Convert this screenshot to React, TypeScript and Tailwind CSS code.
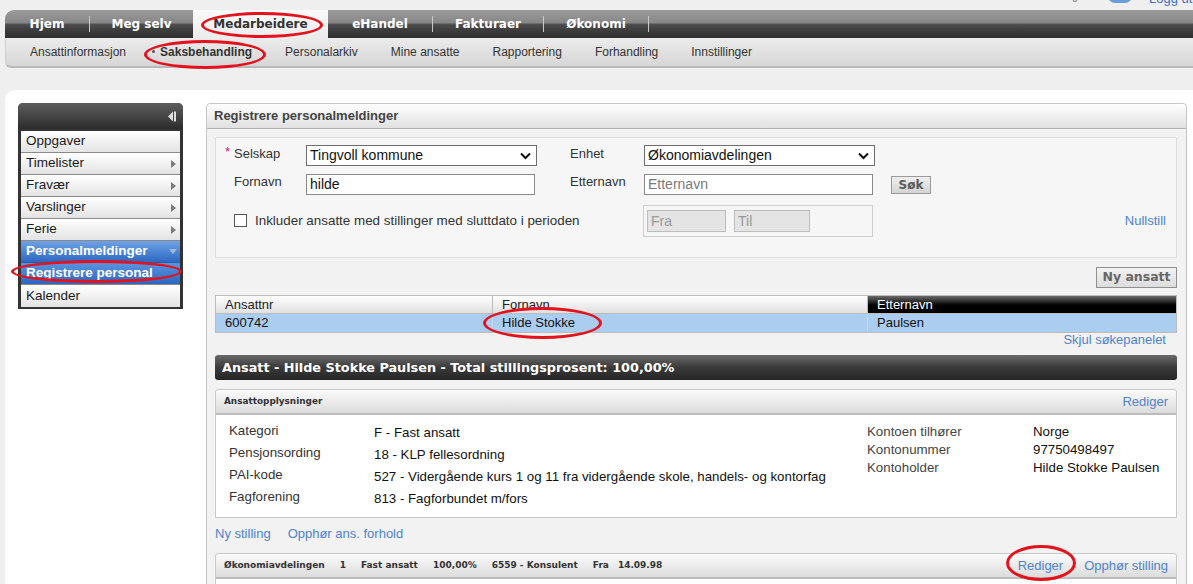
import React from "react";
import { Settings } from "lucide-react";

const LS = "font-['Liberation_Sans',Arial,sans-serif]";
const DV = "font-['DejaVu_Sans',Verdana,sans-serif]";

function RightArrow() {
  return (
    <svg width="5" height="8" viewBox="0 0 5 8">
      <path d="M0 0L5 4L0 8Z" fill="#7a7a7a" />
    </svg>
  );
}

function Chevron() {
  return (
    <svg width="11" height="8" viewBox="0 0 11 8">
      <path d="M1 1.5L5.5 6L10 1.5" fill="none" stroke="#111" strokeWidth="2" />
    </svg>
  );
}

function Ellipse({ cls }: { cls: string }) {
  return <div className={`absolute border-[3px] border-[#e3121c] rounded-[50%] pointer-events-none ${cls}`} />;
}

const sideItems = [
  { label: "Oppgaver", arrow: false },
  { label: "Timelister", arrow: true },
  { label: "Fravær", arrow: true },
  { label: "Varslinger", arrow: true },
  { label: "Ferie", arrow: true },
];

export default function App() {
  return (
    <div className={`relative w-[1193px] h-[584px] overflow-hidden bg-[#efefef] text-[#222] ${LS}`}>
      {/* top strip with cut-off icons */}
      <div className="relative h-[10px]">
        <Settings className="absolute left-[1066px] top-[-15px] text-[#a5a5a5]" size={18} />
        <div className="absolute left-[1108px] top-[-11px] w-[24px] h-[14px] rounded-[7px] bg-[#6b9bd8]" />
        <div className="absolute left-[1149px] top-[-11px] text-[13px] text-[#3d6fc4]">Logg ut</div>
      </div>

      {/* main nav */}
      <div
        className={`ml-[5px] h-[28px] flex rounded-tl-[9px] bg-[linear-gradient(to_bottom,#9a9a9a_0%,#878787_45%,#4d4d4d_52%,#3b3b3b_75%,#303030_100%)] ${DV} font-bold text-[12px] text-white`}
      >
        <div className="w-[84px] flex items-center justify-center">Hjem</div>
        <div className="w-px h-[16px] self-center bg-[#c9c9c9]" />
        <div className="w-[103px] flex items-center justify-center">Meg selv</div>
        <div className="w-[135px] flex items-center justify-center bg-[linear-gradient(to_bottom,#fbfbfb,#ececec)] text-[#333]">
          Medarbeidere
        </div>
        <div className="w-[104px] flex items-center justify-center">eHandel</div>
        <div className="w-px h-[16px] self-center bg-[#c9c9c9]" />
        <div className="w-[110px] flex items-center justify-center">Fakturaer</div>
        <div className="w-px h-[16px] self-center bg-[#c9c9c9]" />
        <div className="w-[104px] flex items-center justify-center">Økonomi</div>
        <div className="w-px h-[16px] self-center bg-[#c9c9c9]" />
      </div>

      {/* sub nav */}
      <div className="ml-[5px] h-[30px] flex items-center gap-[33px] pl-[24px] rounded-bl-[6px] border-b-2 border-l border-[#b9b9b9] border-l-[#d0d0d0] bg-[linear-gradient(to_bottom,#ececec,#d6d6d6)] text-[12px] text-[#333]">
        <span>Ansattinformasjon</span>
        <span className="relative font-bold ml-[1px]">
          <span className="absolute left-[-8px] top-[7px] w-[3px] h-[3px] rounded-full bg-[#555]" />
          Saksbehandling
        </span>
        <span>Personalarkiv</span>
        <span>Mine ansatte</span>
        <span>Rapportering</span>
        <span>Forhandling</span>
        <span>Innstillinger</span>
      </div>

      {/* content */}
      <div className="ml-[5px] mt-[22px] h-[520px] bg-white rounded-tl-[10px] pt-[13px] pl-[13px] pr-[6px] flex gap-[23px]">
        {/* sidebar */}
        <div className="w-[165px] self-start bg-[#333] rounded-t-[5px] pb-[2px]">
          <div className="h-[26px] rounded-t-[5px] bg-[linear-gradient(to_bottom,#5e5e5e,#2c2c2c)] flex items-center justify-end pr-[6px]">
            <svg width="9" height="11" viewBox="0 0 9 11">
              <path d="M0 5.5L5 0.5V10.5Z" fill="#dedede" />
              <rect x="6" y="0.5" width="2" height="10" fill="#dedede" />
            </svg>
          </div>
          <div className="mt-[2px] mx-[3px] text-[13.5px]">
            {sideItems.map((it) => (
              <div
                key={it.label}
                className="h-[22px] border-b border-[#8a8a8a] bg-[linear-gradient(to_bottom,#ffffff,#e3e3e3)] flex items-center justify-between pl-[5px] pr-[4px] text-[#1a1a1a]"
              >
                <span>{it.label}</span>
                {it.arrow && <RightArrow />}
              </div>
            ))}
            <div className="h-[22px] border-b border-[#2a5da8] bg-[linear-gradient(to_bottom,#6fa2e4,#2d68c2)] flex items-center justify-between pl-[5px] pr-[3px] text-white font-bold">
              <span>Personalmeldinger</span>
              <svg width="8" height="5" viewBox="0 0 8 5">
                <path d="M0 0H8L4 5Z" fill="#9fb7d9" />
              </svg>
            </div>
            <div className="h-[22px] border-b border-[#888] bg-[linear-gradient(to_bottom,#5b94de,#2b67c0)] flex items-center pl-[5px] text-white font-bold">
              Registrere personal
            </div>
            <div className="h-[22px] bg-[linear-gradient(to_bottom,#ffffff,#e3e3e3)] flex items-center pl-[5px] text-[#1a1a1a]">
              Kalender
            </div>
          </div>
        </div>

        {/* main panel */}
        <div className="flex-1 self-start h-[600px] border border-[#c6c6c6] rounded-t-[4px] bg-[#f2f2f2]">
          <div className="h-[25px] border-b border-[#b3b3b3] bg-[linear-gradient(to_bottom,#fefefe,#e1e1e1)] rounded-t-[4px] flex items-center pl-[7px] text-[13px] font-bold text-[#444]">
            Registrere personalmeldinger
          </div>
          <div className="pt-[8px] pl-[8px] pr-[9px]">
            {/* search box */}
            <div className="h-[121px] border border-[#dedede] bg-[#f6f6f6] pt-[7px] text-[13px] text-[#333]">
              <div className="flex h-[21px] items-center pl-[18px]">
                <div className="relative w-[72px] -mt-[4px]">
                  <span className="absolute left-[-9px] top-[-2px] text-[#d4187b]">*</span>
                  Selskap
                </div>
                <div className="w-[231px] h-[21px] border border-[#6e6e6e] bg-white flex items-center justify-between pl-[3px] pr-[5px] text-[14px] text-[#111]">
                  <span>Tingvoll kommune</span>
                  <Chevron />
                </div>
                <div className="w-[33px]" />
                <div className="w-[74px] -mt-[4px]">Enhet</div>
                <div className="w-[231px] h-[21px] border border-[#6e6e6e] bg-white flex items-center justify-between pl-[3px] pr-[5px] text-[14px] text-[#111]">
                  <span>Økonomiavdelingen</span>
                  <Chevron />
                </div>
              </div>
              <div className="mt-[8px] flex h-[21px] items-center pl-[18px]">
                <div className="w-[72px] -mt-[5px]">Fornavn</div>
                <div className="w-[229px] h-[21px] border border-[#8a8a8a] bg-white flex items-center pl-[3px] text-[14px] text-[#111]">
                  hilde
                </div>
                <div className="w-[35px]" />
                <div className="w-[74px] -mt-[5px]">Etternavn</div>
                <div className="w-[229px] h-[21px] border border-[#8a8a8a] bg-white flex items-center pl-[3px] text-[14px] text-[#7a7a7a]">
                  Etternavn
                </div>
                <div className="w-[18px]" />
                <div className={`w-[40px] h-[18px] border border-[#9a9a9a] bg-[linear-gradient(to_bottom,#eeeeee,#d4d4d4)] flex items-center justify-center ${DV} font-bold text-[12px] text-[#5a5a5a]`}>
                  Søk
                </div>
              </div>
              <div className="mt-[10px] flex h-[32px] items-center pl-[18px]">
                <div className="w-[409px] flex items-center">
                  <div className="w-[13px] h-[13px] border border-[#555] bg-white mr-[8px]" />
                  <span className="text-[13.4px]">Inkluder ansatte med stillinger med sluttdato i perioden</span>
                </div>
                <div className="w-[230px] h-[32px] border border-[#cfcfcf] flex items-center pl-[3px] gap-[8px]">
                  <div className="w-[79px] h-[22px] border border-[#bdbdbd] bg-[#e4e4e4] flex items-center pl-[3px] text-[14px] text-[#999]">
                    Fra
                  </div>
                  <div className="w-[76px] h-[22px] border border-[#bdbdbd] bg-[#e4e4e4] flex items-center pl-[3px] text-[14px] text-[#999]">
                    Til
                  </div>
                </div>
                <div className="flex-1 text-right pr-[10px] text-[#4f82cf]">Nullstill</div>
              </div>
            </div>

            {/* Ny ansatt */}
            <div className="mt-[9px] flex justify-end">
              <div className={`w-[81px] h-[21px] border border-[#8f8f8f] bg-[linear-gradient(to_bottom,#f2f2f2,#dcdcdc)] flex items-center justify-center ${DV} font-bold text-[12.5px] text-[#666]`}>
                Ny ansatt
              </div>
            </div>

            {/* table */}
            <div className="mt-[7px] border border-[#bcbcbc] text-[13px]">
              <div className="h-[18px] flex border-b border-[#bcbcbc]">
                <div className="w-[277px] border-r border-[#bcbcbc] bg-[linear-gradient(to_bottom,#ffffff,#e0e0e0)] pl-[9px] leading-[17px] text-[#222]">
                  Ansattnr
                </div>
                <div className="w-[375px] border-r border-[#bcbcbc] bg-[linear-gradient(to_bottom,#ffffff,#e0e0e0)] pl-[9px] leading-[17px] text-[#222]">
                  Fornavn
                </div>
                <div className="flex-1 bg-[linear-gradient(to_bottom,#6a6a6a,#000000_55%,#000000)] pl-[9px] leading-[17px] text-white">
                  Etternavn
                </div>
              </div>
              <div className="h-[18px] flex bg-[#abcdef] text-[#111]">
                <div className="w-[277px] border-r border-[#c4d8ef] pl-[9px] leading-[18px]">600742</div>
                <div className="w-[375px] border-r border-[#c4d8ef] pl-[9px] leading-[18px]">Hilde Stokke</div>
                <div className="flex-1 pl-[9px] leading-[18px]">Paulsen</div>
              </div>
            </div>
            <div className="-mt-[1px] text-right pr-[11px] text-[13px] leading-[16px] text-[#4f82cf]">Skjul søkepanelet</div>

            {/* dark bar */}
            <div className={`mt-[7px] h-[25px] rounded-[3px] bg-[linear-gradient(to_bottom,#6a6a6a,#3a3a3a_50%,#262626)] flex items-center pl-[7px] ${DV} font-bold text-[12.8px] text-white`}>
              Ansatt - Hilde Stokke Paulsen - Total stillingsprosent: 100,00%
            </div>

            {/* Ansattopplysninger */}
            <div className="mt-[9px] border border-[#c8c8c8] rounded-t-[3px]">
              <div className="h-[25px] border-b-2 border-[#bcbcbc] bg-[linear-gradient(to_bottom,#fbfbfb,#dcdcdc)] rounded-t-[3px] flex items-center justify-between pl-[8px] pr-[8px]">
                <span className={`${DV} font-bold text-[8.9px] text-[#333]`}>Ansattopplysninger</span>
                <span className="text-[13px] text-[#4f82cf]">Rediger</span>
              </div>
              <div className="h-[102px] bg-white flex text-[13.3px]">
                <div className="w-[651px] pl-[13px] pt-[7px]">
                  {[
                    ["Kategori", "F - Fast ansatt"],
                    ["Pensjonsording", "18 - KLP fellesordning"],
                    ["PAI-kode", "527 - Vidergående kurs 1 og 11 fra vidergående skole, handels- og kontorfag"],
                    ["Fagforening", "813 - Fagforbundet m/fors"],
                  ].map(([l, v]) => (
                    <div key={l} className="flex h-[22px] items-center">
                      <div className="w-[145px] -mt-[4px] text-[#333]">{l}</div>
                      <div className="text-[#111]">{v}</div>
                    </div>
                  ))}
                </div>
                <div className="flex-1 pt-[8px]">
                  {[
                    ["Kontoen tilhører", "Norge"],
                    ["Kontonummer", "97750498497"],
                    ["Kontoholder", "Hilde Stokke Paulsen"],
                  ].map(([l, v]) => (
                    <div key={l} className="flex h-[18px] items-center">
                      <div className="w-[166px] text-[#444]">{l}</div>
                      <div className="text-[#111]">{v}</div>
                    </div>
                  ))}
                </div>
              </div>
            </div>

            {/* links */}
            <div className="mt-[8px] flex gap-[17px] text-[13px] leading-[16px] text-[#4f82cf]">
              <span>Ny stilling</span>
              <span>Opphør ans. forhold</span>
            </div>

            {/* stilling panel */}
            <div className="mt-[11px] border border-[#c8c8c8] rounded-t-[3px]">
              <div className="h-[25px] border-b-2 border-[#bcbcbc] bg-[linear-gradient(to_bottom,#fbfbfb,#dcdcdc)] rounded-t-[3px] flex items-center justify-between pl-[8px] pr-[8px]">
                <div className={`flex gap-[15px] ${DV} font-bold text-[9px] text-[#333]`}>
                  <span>Økonomiavdelingen</span>
                  <span>1</span>
                  <span>Fast ansatt</span>
                  <span>100,00%</span>
                  <span>6559 - Konsulent</span>
                  <span>
                    Fra<span className="ml-[9px]">14.09.98</span>
                  </span>
                </div>
                <div className="flex gap-[21px] text-[13px] text-[#4f82cf]">
                  <span>Rediger</span>
                  <span>Opphør stilling</span>
                </div>
              </div>
              <div className="h-[40px] bg-white" />
            </div>
          </div>
        </div>
      </div>

      {/* red annotation ellipses */}
      <Ellipse cls="left-[201px] top-[12px] w-[122px] h-[26px]" />
      <Ellipse cls="left-[144px] top-[40px] w-[122px] h-[29px]" />
      <Ellipse cls="left-[11px] top-[260px] w-[171px] h-[23px]" />
      <Ellipse cls="left-[483px] top-[307px] w-[119px] h-[32px]" />
      <Ellipse cls="left-[1006px] top-[545px] w-[70px] h-[36px]" />
    </div>
  );
}
